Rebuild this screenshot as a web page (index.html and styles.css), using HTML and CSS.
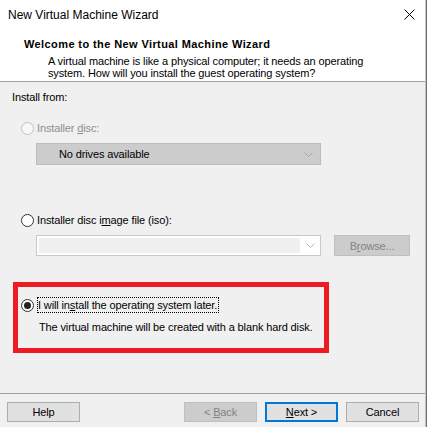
FILE: index.html
```html
<!DOCTYPE html>
<html>
<head>
<meta charset="utf-8">
<link rel="stylesheet" href="styles.css">
</head>
<body>
<div class="window">
  <div class="top">
    <div class="titlebar">
      <span class="title">New Virtual Machine Wizard</span>
      <svg class="close" width="11" height="11" viewBox="0 0 11 11"><path d="M0.5 0.5 L10.5 10.5 M10.5 0.5 L0.5 10.5" stroke="#000" stroke-width="1" fill="none"/></svg>
    </div>
    <div class="header">
      <div class="h-title">Welcome to the New Virtual Machine Wizard</div>
      <div class="h-desc">A virtual machine is like a physical computer; it needs an operating<br>system. How will you install the guest operating system?</div>
    </div>
  </div>
  <div class="content">
    <div class="install-from">Install from:</div>
    <div class="radio-row disc">
      <span class="radio disabled"></span>
      <span class="label disabled-text">Installer <u>d</u>isc:</span>
    </div>
    <div class="dropdown">
      <span class="dd-text">No drives available</span>
      <svg class="chev" width="9" height="5" viewBox="0 0 9 5"><path d="M0.5 0.5 L4.5 4.5 L8.5 0.5" stroke="#a6a6a6" stroke-width="1" fill="none"/></svg>
    </div>
    <div class="radio-row iso">
      <span class="radio"></span>
      <span class="label">Installer disc i<u>m</u>age file (iso):</span>
    </div>
    <div class="combo-row">
      <div class="combo">
        <div class="combo-edit"></div>
        <div class="combo-btn"><svg width="9" height="5" viewBox="0 0 9 5"><path d="M0.5 0.5 L4.5 4.5 L8.5 0.5" stroke="#b4b4b4" stroke-width="1" fill="none"/></svg></div>
      </div>
      <div class="btn disabled-btn browse"><span>B<u>r</u>owse...</span></div>
    </div>
    <div class="redbox">
      <div class="radio-row later">
        <span class="radio checked"></span>
        <span class="label focus">I will in<u>s</u>tall the operating system later.</span>
      </div>
      <div class="later-desc">The virtual machine will be created with a blank hard disk.</div>
    </div>
  </div>
  <div class="footer">
    <div class="btn help"><span>Help</span></div>
    <div class="btn disabled-btn back"><span>&lt; <u>B</u>ack</span></div>
    <div class="btn default next"><span><u>N</u>ext &gt;</span></div>
    <div class="btn cancel"><span>Cancel</span></div>
  </div>
</div>
</body>
</html>
```
FILE: styles.css
```css
html, body {
  margin: 0;
  padding: 0;
  background: #6e6e6e;
}
body {
  width: 427px;
  height: 427px;
  overflow: hidden;
  font-family: "Liberation Sans", Arial, sans-serif;
  font-size: 11px;
  letter-spacing: -0.13px;
  color: #000;
}
.window {
  width: 425px;
  height: 427px;
  border-right: 1px solid #c4c4c4;
  background: #f0f0f0;
  display: flex;
  flex-direction: column;
}
.top {
  background: #fff;
  border-bottom: 1px solid #a0a0a0;
  height: 81px;
  display: flex;
  flex-direction: column;
}
.titlebar {
  height: 30px;
  display: flex;
  align-items: center;
  padding-left: 8px;
  padding-right: 10px;
  justify-content: space-between;
}
.title {
  font-size: 12px;
  letter-spacing: 0;
  color: #000;
  margin-top: -1px;
}
.close {
  margin-top: -2px;
}
.header {
  padding-left: 24px;
  padding-top: 7px;
}
.h-title {
  font-weight: bold;
  font-size: 11px;
  letter-spacing: 0.4px;
  line-height: 14px;
}
.h-desc {
  margin-top: 4px;
  padding-left: 24px;
  line-height: 12px;
}
.content {
  flex: 1;
  display: flex;
  flex-direction: column;
}
.install-from {
  margin-top: 7px;
  padding-left: 12px;
  line-height: 16px;
}
.radio-row {
  display: flex;
  align-items: center;
  height: 16px;
  gap: 3px;
  padding-left: 21px;
}
.radio {
  width: 11px;
  height: 11px;
  border: 1px solid #333;
  border-radius: 50%;
  background: #fff;
  flex: none;
  position: relative;
}
.radio.disabled {
  border-color: #c2c2c2;
  background: #f7f7f7;
}
.radio.checked::after {
  content: "";
  position: absolute;
  left: 2px;
  top: 2px;
  width: 7px;
  height: 7px;
  border-radius: 50%;
  background: #222;
}
.label {
  line-height: 16px;
}
.disabled-text {
  color: #8d8d8d;
}
.disc {
  margin-top: 15px;
}
.dropdown {
  margin-top: 7px;
  margin-left: 36px;
  width: 254px;
  height: 20px;
  border: 1px solid #bcbcbc;
  background: #cccccc;
  display: flex;
  align-items: center;
  justify-content: space-between;
  padding-left: 22px;
  padding-right: 7px;
  box-sizing: content-box;
}
.dd-text {
  color: #000;
  line-height: 16px;
}
.iso {
  margin-top: 47px;
}
.combo-row {
  margin-top: 7px;
  margin-left: 36px;
  display: flex;
  gap: 13px;
}
.combo {
  width: 281px;
  height: 15px;
  border: 1px solid #c8c8c8;
  background: #fff;
  display: flex;
  padding: 2px 0 2px 2px;
  box-sizing: content-box;
}
.combo-edit {
  flex: 1;
  background: #f0f0f0;
}
.combo-btn {
  width: 20px;
  display: flex;
  align-items: center;
  justify-content: center;
}
.btn {
  box-sizing: border-box;
  width: 73px;
  height: 20px;
  border: 1px solid #adadad;
  background: #e1e1e1;
  display: flex;
  align-items: center;
  justify-content: center;
  line-height: 16px;
}
.disabled-btn {
  background: #cccccc;
  border-color: #bfbfbf;
  color: #838383;
}
.browse {
  width: 76px;
  height: 21px;
}
.redbox {
  margin-top: 26px;
  margin-left: 13px;
  width: 316px;
  height: 71px;
  box-sizing: border-box;
  border: 5px solid #ed1c24;
  padding: 10px 0 0 3px;
}
.later {
  padding-left: 0;
}
.focus {
  border: 1px dotted #000;
  line-height: 14px;
  padding: 0 1px 0 0;
}
.later-desc {
  margin-top: 6px;
  padding-left: 18px;
  line-height: 16px;
}
.footer {
  height: 34px;
  border-top: 1px solid #a0a0a0;
  box-sizing: border-box;
  display: flex;
  padding: 8px 0 0 7px;
}
.back {
  margin-left: 104px;
}
.next {
  margin-left: 8px;
  border: 2px solid #0078d7;
}
.cancel {
  margin-left: 8px;
}
```
